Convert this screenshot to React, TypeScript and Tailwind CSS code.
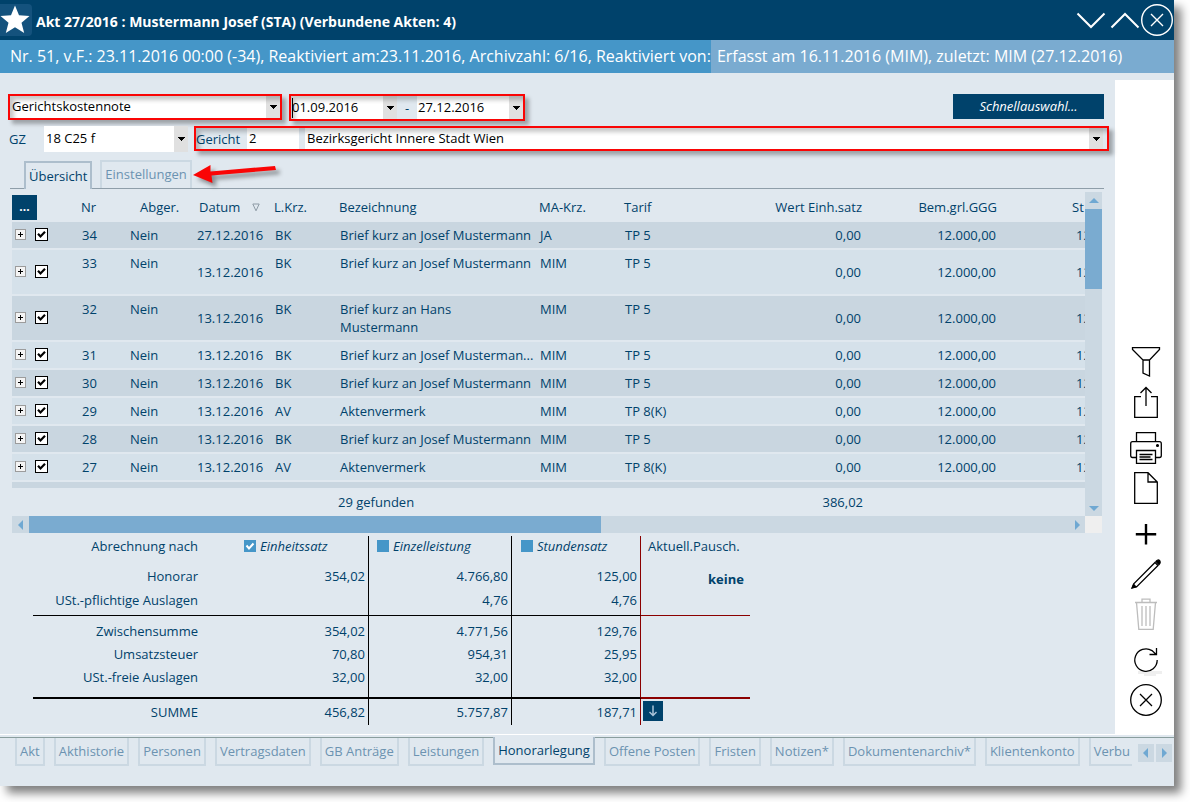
import type { ReactNode } from "react";

type Entry = {
  nr: number;
  datum: string;
  krz: string;
  text: string;
  ma: string;
  tarif: string;
  tall?: boolean;
};

const entries: Entry[] = [
  { nr: 34, datum: "27.12.2016", krz: "BK", text: "Brief kurz an Josef Mustermann", ma: "JA", tarif: "TP 5" },
  { nr: 33, datum: "13.12.2016", krz: "BK", text: "Brief kurz an Josef Mustermann", ma: "MIM", tarif: "TP 5", tall: true },
  { nr: 32, datum: "13.12.2016", krz: "BK", text: "Brief kurz an Hans Mustermann", ma: "MIM", tarif: "TP 5", tall: true },
  { nr: 31, datum: "13.12.2016", krz: "BK", text: "Brief kurz an Josef Musterman...", ma: "MIM", tarif: "TP 5" },
  { nr: 30, datum: "13.12.2016", krz: "BK", text: "Brief kurz an Josef Mustermann", ma: "MIM", tarif: "TP 5" },
  { nr: 29, datum: "13.12.2016", krz: "AV", text: "Aktenvermerk", ma: "MIM", tarif: "TP 8(K)" },
  { nr: 28, datum: "13.12.2016", krz: "BK", text: "Brief kurz an Josef Mustermann", ma: "MIM", tarif: "TP 5" },
  { nr: 27, datum: "13.12.2016", krz: "AV", text: "Aktenvermerk", ma: "MIM", tarif: "TP 8(K)" },
];

const tabs = [
  "Akt",
  "Akthistorie",
  "Personen",
  "Vertragsdaten",
  "GB Anträge",
  "Leistungen",
  "Honorarlegung",
  "Offene Posten",
  "Fristen",
  "Notizen*",
  "Dokumentenarchiv*",
  "Klientenkonto",
  "Verbu",
];

const sums = [
  { label: "Honorar", values: ["354,02", "4.766,80", "125,00"], cls: "h-6 pt-[3px]" },
  { label: "USt.-pflichtige Auslagen", values: ["", "4,76", "4,76"], cls: "h-7 pt-[3px] border-b" },
  { label: "Zwischensumme", values: ["354,02", "4.771,56", "129,76"], cls: "h-[27px] pt-[6px]" },
  { label: "Umsatzsteuer", values: ["70,80", "954,31", "25,95"], cls: "h-[23px] pt-[2px]" },
  { label: "USt.-freie Auslagen", values: ["32,00", "32,00", "32,00"], cls: "h-[33px] pt-[2px] border-b-2" },
  { label: "SUMME", values: ["456,82", "5.757,87", "187,71"], cls: "h-[26px] pt-1" },
];

function Marker() {
  return (
    <span className="pointer-events-none absolute inset-0 border-2 border-[#fa0505] shadow-[4px_4px_4px_rgba(0,0,0,0.3),inset_4px_4px_4px_rgba(0,0,0,0.22)]" />
  );
}

function Caret() {
  return (
    <svg width="7" height="4" viewBox="0 0 7 4" shapeRendering="crispEdges">
      <path d="M0 0h7v1H6v1H5v1H4v1H3V3H2V2H1V1H0z" fill="#000" />
    </svg>
  );
}

function Combo({ label, value, className }: { label: string; value: string; className: string }) {
  return (
    <div className={`relative bg-white ${className}`}>
      <select
        aria-label={label}
        className="h-full w-full appearance-none bg-transparent pr-4 pb-0.5 pl-0.5 text-[13px] leading-[18px] text-black outline-none"
      >
        <option>{value}</option>
      </select>
      <span className="pointer-events-none absolute inset-y-0 right-0 flex w-3.5 items-center justify-center bg-[#e0e0e0]">
        <Caret />
      </span>
    </div>
  );
}

function DateBox({ label, value }: { label: string; value: string }) {
  return (
    <div className="flex h-full flex-1 bg-white">
      <input
        aria-label={label}
        defaultValue={value}
        className="w-0 flex-1 bg-transparent pb-0.5 pl-px text-[13px] text-black outline-none"
      />
      <button aria-label={`${label} wählen`} className="flex w-3.5 items-center justify-center bg-[#e0e0e0]">
        <Caret />
      </button>
    </div>
  );
}

function Arrow({ dir }: { dir: "up" | "down" | "left" | "right" }) {
  const d = {
    up: "M0 7L5 2L10 7z",
    down: "M0 3L5 8L10 3z",
    left: "M7 0L2 5L7 10z",
    right: "M3 0L8 5L3 10z",
  }[dir];
  return (
    <svg width="10" height="10" viewBox="0 0 10 10">
      <path d={d} fill="#6fa8d2" />
    </svg>
  );
}

function Tool({ label, children, color = "#000" }: { label: string; children: ReactNode; color?: string }) {
  return (
    <button aria-label={label} className="block size-8">
      <svg width="32" height="32" viewBox="0 0 32 32" fill="none" stroke={color} strokeWidth="1.3">
        {children}
      </svg>
    </button>
  );
}

function SumCheck({ label, checked }: { label: string; checked?: boolean }) {
  return (
    <label className="flex items-center gap-1 italic">
      <span className="relative flex size-3">
        <input type="checkbox" defaultChecked={checked} className="peer size-3 appearance-none bg-[#4596c8]" />
        <svg
          viewBox="0 0 12 12"
          className="pointer-events-none absolute inset-0 hidden peer-checked:block"
          fill="none"
          stroke="#fff"
          strokeWidth="2"
        >
          <path d="M2.5 5.5L5 8.5L9.5 3.5" />
        </svg>
      </span>
      {label}
    </label>
  );
}

function EntryRow({ e, odd }: { e: Entry; odd: boolean }) {
  const bg = odd ? "bg-[#d5e1ea]" : "bg-[#c9d6e0]";
  const top = "border-b-2 border-[#e0e8ef] pl-[3px] py-1 align-top";
  const mid = "border-b-2 border-[#e0e8ef] py-1 align-middle";
  return (
    <tr className={`${bg} ${e.tall ? "h-[46px]" : "h-7"}`}>
      <td className="border-b-2 border-[#e0e8ef] pb-0.5 pl-[3px] align-middle">
        <button
          aria-label={`Eintrag ${e.nr} aufklappen`}
          className="flex size-[11px] items-center justify-center border border-[#9c9c9c] bg-[#f4f4f4]"
        >
          <svg width="5" height="5" viewBox="0 0 5 5" shapeRendering="crispEdges">
            <path d="M2 0h1v5H2zM0 2h5v1H0z" fill="#000" />
          </svg>
        </button>
      </td>
      <td className="border-b-2 border-[#e0e8ef] pb-0.5 pl-[3px] align-middle">
        <span className="relative flex size-[13px]">
          <input
            type="checkbox"
            aria-label={`Eintrag ${e.nr} auswählen`}
            defaultChecked
            className="peer size-[13px] appearance-none border border-black bg-white"
          />
          <svg
            viewBox="0 0 13 13"
            className="pointer-events-none absolute inset-0 hidden peer-checked:block"
            fill="none"
            stroke="#000"
            strokeWidth="2.2"
          >
            <path d="M3 5.8L5.500 8.500L10 3.800" />
          </svg>
        </span>
      </td>
      <td className={top}>{e.nr}</td>
      <td className={top}>Nein</td>
      <td className={`${mid} pr-[9px] text-right`}>{e.datum}</td>
      <td className={top}>{e.krz}</td>
      <td className={top}>
        <div className={e.nr === 32 ? "w-[150px]" : "whitespace-nowrap"}>{e.text}</div>
      </td>
      <td className={top}>{e.ma}</td>
      <td className={top}>{e.tarif}</td>
      <td className={`${mid} pr-[3px] text-right`}>0,00</td>
      <td className={`${mid} pr-[3px] text-right`}>12.000,00</td>
      <td className={`${mid} overflow-hidden pl-[77px]`}>12</td>
    </tr>
  );
}

export default function App() {
  return (
    <div className="flex min-h-screen bg-white pr-4 pb-4 font-['Open_Sans','Noto_Sans',sans-serif] text-[13px] leading-[18px] text-[#00426b]">
      <div className="flex min-w-0 flex-1 flex-col bg-[#e0e8ef] shadow-[7px_7px_9px_rgba(0,0,0,0.5)]">
        <header className="flex h-10 items-center bg-[#00426b] text-white">
          <button aria-label="Favorit" className="size-8 rounded-r bg-[#14527d]">
            <svg width="32" height="32" viewBox="0 0 32 32">
              <path d="M15 1.500L19 11.200L29.500 11.900L21.500 18.700L24.200 29L15 23.300L5.800 29L8.500 18.700L0.500 11.900L11 11.200z" fill="#fff" />
            </svg>
          </button>
          <h1 className="ml-1 flex-1 pt-1 text-[14px] font-bold">Akt 27/2016 : Mustermann Josef (STA) (Verbundene Akten: 4)</h1>
          <button aria-label="Nach unten" className="mr-1">
            <svg width="30" height="32" viewBox="0 0 30 32" fill="none" stroke="#fff" strokeWidth="2">
              <path d="M1.500 9.500L15 23L28.500 9.500" />
            </svg>
          </button>
          <button aria-label="Nach oben">
            <svg width="30" height="32" viewBox="0 0 30 32" fill="none" stroke="#fff" strokeWidth="2">
              <path d="M1.500 23.500L15 10L28.500 23.500" />
            </svg>
          </button>
          <button aria-label="Schließen">
            <svg width="34" height="34" viewBox="0 0 34 34" fill="none" stroke="#fff" strokeWidth="1.400">
              <circle cx="17" cy="17" r="15.300" />
              <path d="M11 11L23 23M23 11L11 23" />
            </svg>
          </button>
        </header>

        <div className="flex h-[33px] items-center bg-[#7aabd0] text-[16px] leading-[33px] whitespace-nowrap text-white">
          <span className="bg-[#4596c8] pl-2.5">
            Nr. 51, v.F.: 23.11.2016 00:00 (-34), Reaktiviert am:23.11.2016, Archivzahl: 6/16, Reaktiviert von:
          </span>
          <span className="pl-1.5">Erfasst am 16.11.2016 (MIM), zuletzt: MIM (27.12.2016)</span>
        </div>

        <div className="flex flex-1 border-b border-white">
          <main className="min-w-0 flex-1 pt-[21px]">
            <div className="flex h-[27px] items-start pr-[11px] pl-2">
              <div className="relative h-[26px] w-[274px] p-0.5">
                <Combo label="Vorlage" value="Gerichtskostennote" className="h-full" />
                <Marker />
              </div>
              <div className="relative ml-[7px] flex h-[27px] w-[236px] items-center p-0.5">
                <DateBox label="Datum von" value="01.09.2016" />
                <span className="pointer-events-none absolute top-1 left-[3px] h-5 w-px bg-black" />
                <span className="w-5 text-center">-</span>
                <DateBox label="Datum bis" value="27.12.2016" />
                <Marker />
              </div>
              <button className="ml-auto h-[25px] w-[151px] bg-[#00426b] pb-0.5 text-white italic">Schnellauswahl...</button>
            </div>

            <div className="mt-[5px] flex h-[26px] pr-[6px] pl-[9px]">
              <span className="w-[35px] pt-1">GZ</span>
              <Combo label="GZ" value="18 C25 f" className="h-[26px] w-36" />
              <div className="relative ml-1.5 flex h-[25px] flex-1 p-0.5">
                <label htmlFor="gericht" className="w-[51px] pt-0.5">
                  Gericht
                </label>
                <input id="gericht" defaultValue="2" className="mr-1.5 w-[52px] bg-white pb-0.5 pl-0.5 text-[13px] text-black outline-none" />
                <Combo label="Gericht Name" value="Bezirksgericht Innere Stadt Wien" className="mr-1 flex-1" />
                <Marker />
              </div>
            </div>

            <div className="relative mt-2 mr-[11px] ml-[10px] flex h-[29px] items-end border-b border-[#8f9ea9]">
              <button className="-mb-px ml-3.5 h-7 border-2 border-b-0 border-[#adbecc] bg-[#e0e8ef] px-[3px]">Übersicht</button>
              <button className="ml-2 h-7 border-2 border-b-0 border-[#cbd8e2] px-[3px] pb-0.5 text-[#6c93b1]">Einstellungen</button>
              <svg
                className="absolute top-0 left-[180px] drop-shadow-[4px_4px_2px_rgba(0,0,0,0.4)]"
                width="96"
                height="36"
                viewBox="0 0 96 36"
              >
                <path d="M85 6L86 10L21.500 15.500L22.500 23L3 15L20.500 5L20.500 11.500z" fill="#fa0505" />
              </svg>
            </div>

            <div className="mt-[3px] mr-[13px] ml-3">
              <div className="flex">
                <div className="min-w-0 flex-1 overflow-hidden">
                  <table className="w-full table-fixed border-separate border-spacing-0">
                    <colgroup>
                      <col className="w-5" />
                      <col className="w-[47px]" />
                      <col className="w-12" />
                      <col className="w-[70px]" />
                      <col className="w-[75px]" />
                      <col className="w-[65px]" />
                      <col className="w-[200px]" />
                      <col className="w-[85px]" />
                      <col className="w-[85px]" />
                      <col />
                      <col className="w-[135px]" />
                      <col className="w-[86px]" />
                    </colgroup>
                    <thead>
                      <tr className="h-[30px] text-left [&>th]:p-0 [&>th]:font-normal">
                        <th colSpan={2}>
                          <button className="block h-[25px] w-[25px] bg-[#00426b] text-[12px] leading-[24px] font-bold text-white">...</button>
                        </th>
                        <th>
                          <div className="pl-0.5">Nr</div>
                        </th>
                        <th>
                          <div className="pl-[13px]">Abger.</div>
                        </th>
                        <th>
                          <div className="flex items-center justify-between pr-3 pl-0.5">
                            Datum
                            <svg width="8" height="9" viewBox="0 0 8 9" fill="none" stroke="#8d9aa5">
                              <path d="M0.800 1H7.200L4 7.800z" />
                            </svg>
                          </div>
                        </th>
                        <th>
                          <div className="pl-0.5">L.Krz.</div>
                        </th>
                        <th>
                          <div className="pl-0.5">Bezeichnung</div>
                        </th>
                        <th>
                          <div className="pl-0.5">MA-Krz.</div>
                        </th>
                        <th>
                          <div className="pl-0.5">Tarif</div>
                        </th>
                        <th>
                          <div className="pr-0.5 text-right">Wert Einh.satz</div>
                        </th>
                        <th>
                          <div className="pr-0.5 text-right">Bem.grl.GGG</div>
                        </th>
                        <th>
                          <div className="pl-[73px]">St</div>
                        </th>
                      </tr>
                    </thead>
                    <tbody>
                      {entries.map((e, i) => (
                        <EntryRow key={e.nr} e={e} odd={i % 2 === 1} />
                      ))}
                      <tr className="h-1.5 bg-[#c9d6e0]">
                        <td colSpan={12} className="p-0" />
                      </tr>
                    </tbody>
                    <tfoot>
                      <tr className="h-7">
                        <td colSpan={6} className="p-0" />
                        <td colSpan={3} className="p-0 pl-px">
                          29 gefunden
                        </td>
                        <td className="p-0 pr-px text-right">386,02</td>
                        <td colSpan={2} className="p-0" />
                      </tr>
                    </tfoot>
                  </table>
                </div>
                <div className="flex w-[17px] flex-col bg-[#cbd8e2]">
                  <button aria-label="Hoch" className="flex h-[17px] items-center justify-center">
                    <Arrow dir="up" />
                  </button>
                  <div className="h-20 bg-[#7aabd0]" />
                  <button aria-label="Runter" className="mt-auto flex h-[17px] items-center justify-center">
                    <Arrow dir="down" />
                  </button>
                </div>
              </div>
              <div className="flex h-[17px]">
                <div className="flex flex-1 bg-[#cbd8e2]">
                  <button aria-label="Links" className="flex w-[17px] items-center justify-center">
                    <Arrow dir="left" />
                  </button>
                  <div className="w-[572px] bg-[#7aabd0]" />
                  <button aria-label="Rechts" className="ml-auto flex w-[17px] items-center justify-center">
                    <Arrow dir="right" />
                  </button>
                </div>
                <div className="w-[17px] bg-[#efefef]" />
              </div>
            </div>

            <table className="mt-[3px] mb-2 ml-[33px] w-[717px] table-fixed border-separate border-spacing-0 [&_td]:align-top [&_th]:align-top [&_th]:font-normal">
              <colgroup>
                <col className="w-[168px]" />
                <col className="w-[168px]" />
                <col className="w-[143px]" />
                <col className="w-[129px]" />
                <col />
              </colgroup>
              <thead>
                <tr className="h-7 text-left">
                  <th className="pt-px pr-[3px] text-right">Abrechnung nach</th>
                  <th className="border-r border-black pt-px pl-[43px]">
                    <SumCheck label="Einheitssatz" checked />
                  </th>
                  <th className="border-r border-black pt-px pl-2">
                    <SumCheck label="Einzelleistung" />
                  </th>
                  <th className="border-r border-[#8b0000] pt-px pl-[9px]">
                    <SumCheck label="Stundensatz" />
                  </th>
                  <th className="pt-px pl-[7px]">Aktuell.Pausch.</th>
                </tr>
              </thead>
              <tbody>
                {sums.map((s) => (
                  <tr key={s.label}>
                    <td className={`border-black pr-[3px] text-right ${s.cls}`}>{s.label}</td>
                    <td className={`border-r border-black pr-[3px] text-right ${s.cls}`}>{s.values[0]}</td>
                    <td className={`border-r border-black pr-[3px] text-right ${s.cls}`}>{s.values[1]}</td>
                    <td className={`border-r border-r-[#8b0000] border-b-black pr-[3px] text-right ${s.cls}`}>{s.values[2]}</td>
                    <td className={`border-[#8b0000] ${s.label === "SUMME" ? "pt-0.5 pl-0.5" : `pr-[6px] text-right ${s.cls}`}`}>
                      {s.label === "Honorar" && <div className="-mb-1 pt-[3px] font-bold">keine</div>}
                      {s.label === "SUMME" && (
                        <button aria-label="Summe übernehmen" className="flex size-5 items-center justify-center bg-[#00426b]">
                          <svg width="10" height="12" viewBox="0 0 10 12" fill="none" stroke="#a9c3d8" strokeWidth="1.500">
                            <path d="M5 0.500V10M1.500 7L5 10.500L8.500 7" />
                          </svg>
                        </button>
                      )}
                    </td>
                  </tr>
                ))}
              </tbody>
            </table>
          </main>

          <aside className="mt-[7px] flex w-[59px] flex-col items-center justify-end gap-3.5 bg-white pb-[18px] pl-[3px]">
            <div className="flex flex-col gap-2">
              <Tool label="Filter">
                <path d="M2.500 1.700H29.500V3.500L19.500 14V30L13 27V14L2.500 3.500zM13 14H19.500" />
              </Tool>
              <Tool label="Exportieren">
                <path d="M11 10.700H4.700V31.300H27.300V10.700H21M16 20V1.500M10.500 7L16 1.500L21.500 7" />
              </Tool>
            </div>
            <div className="flex flex-col gap-2">
              <Tool label="Drucken">
                <path d="M6.500 9.700V0.700H25.500V9.700M6.500 25.500H2.500Q0.700 25.500 0.700 23.500V11.700Q0.700 9.700 2.500 9.700H29.500Q31.300 9.700 31.300 11.700V23.500Q31.300 25.500 29.500 25.500H25.500M6.500 18.500H25.500V31.300H6.500zM9.500 22.500H22.500M9.500 25H20.500M9.500 27.500H22.500" />
                <circle cx="27.500" cy="13.500" r="0.900" fill="#000" />
              </Tool>
              <Tool label="Neues Dokument">
                <path d="M4.700 0.700H18L27.300 10V31.300H4.700zM18 0.700V10H27.300" />
              </Tool>
            </div>
            <div className="flex flex-col gap-2">
              <Tool label="Hinzufügen">
                <path d="M16 6V26.500M5.800 16.200H26.200" strokeWidth="2.400" />
              </Tool>
              <Tool label="Bearbeiten">
                <path d="M2.500 29.500L4 25.500L25 4.500L28 7.500L7 28.500z" />
                <path d="M26 3.500Q28 1 29.500 2.500Q31 4.500 29 6.500zM2 30L3.500 26.500L6 29z" fill="#000" />
              </Tool>
              <Tool label="Löschen" color="#bdbdbd">
                <path d="M5 4.500H27M6.500 4.500L8.800 31.300H23.200L25.500 4.500M12 4V1.200H20V4M12 8V28M16 8V28M20 8V28" />
              </Tool>
            </div>
            <div className="flex flex-col gap-2">
              <Tool label="Aktualisieren">
                <path d="M8 28.500H32M14 31H26" stroke="#efefef" strokeWidth="3" />
                <path d="M27.200 16A11.200 11.200 0 1 1 22 6.600L26.200 10.500M19.500 10.500H26.500V4" />
              </Tool>
              <Tool label="Abbrechen">
                <circle cx="16" cy="16" r="15.300" />
                <path d="M10 10L22 22M22 10L10 22" />
              </Tool>
            </div>
          </aside>
        </div>

        <footer className="mt-[2px] flex h-[49px] items-start">
          <nav className="relative flex h-[30px] min-w-0 flex-1 items-start gap-[9px] overflow-hidden pl-[15px]">
            <span className="absolute inset-x-0 top-0 h-px bg-[#8a9e9e]" />
            {tabs.map((t) =>
              t === "Honorarlegung" ? (
                <button key={t} className="relative h-7 shrink-0 border-2 border-t-0 border-[#adbecc] bg-[#e0e8ef] px-[3px]">
                  {t}
                </button>
              ) : (
                <button
                  key={t}
                  className="mt-px h-7 shrink-0 border-2 border-t-0 border-[#cbd8e2] px-[3px] whitespace-nowrap text-[#6c93b1]"
                >
                  {t}
                </button>
              ),
            )}
          </nav>
          <div className="flex h-[30px] items-start gap-0.5 border-t border-[#8a9e9e] pt-1.5 pr-0.5 pl-1.5">
            <button aria-label="Tabs zurück" className="flex h-[18px] w-4 items-center justify-center bg-[#cbd8e2]">
              <Arrow dir="left" />
            </button>
            <button aria-label="Tabs weiter" className="flex h-[18px] w-4 items-center justify-center bg-[#cbd8e2]">
              <Arrow dir="right" />
            </button>
          </div>
        </footer>
      </div>
    </div>
  );
}
